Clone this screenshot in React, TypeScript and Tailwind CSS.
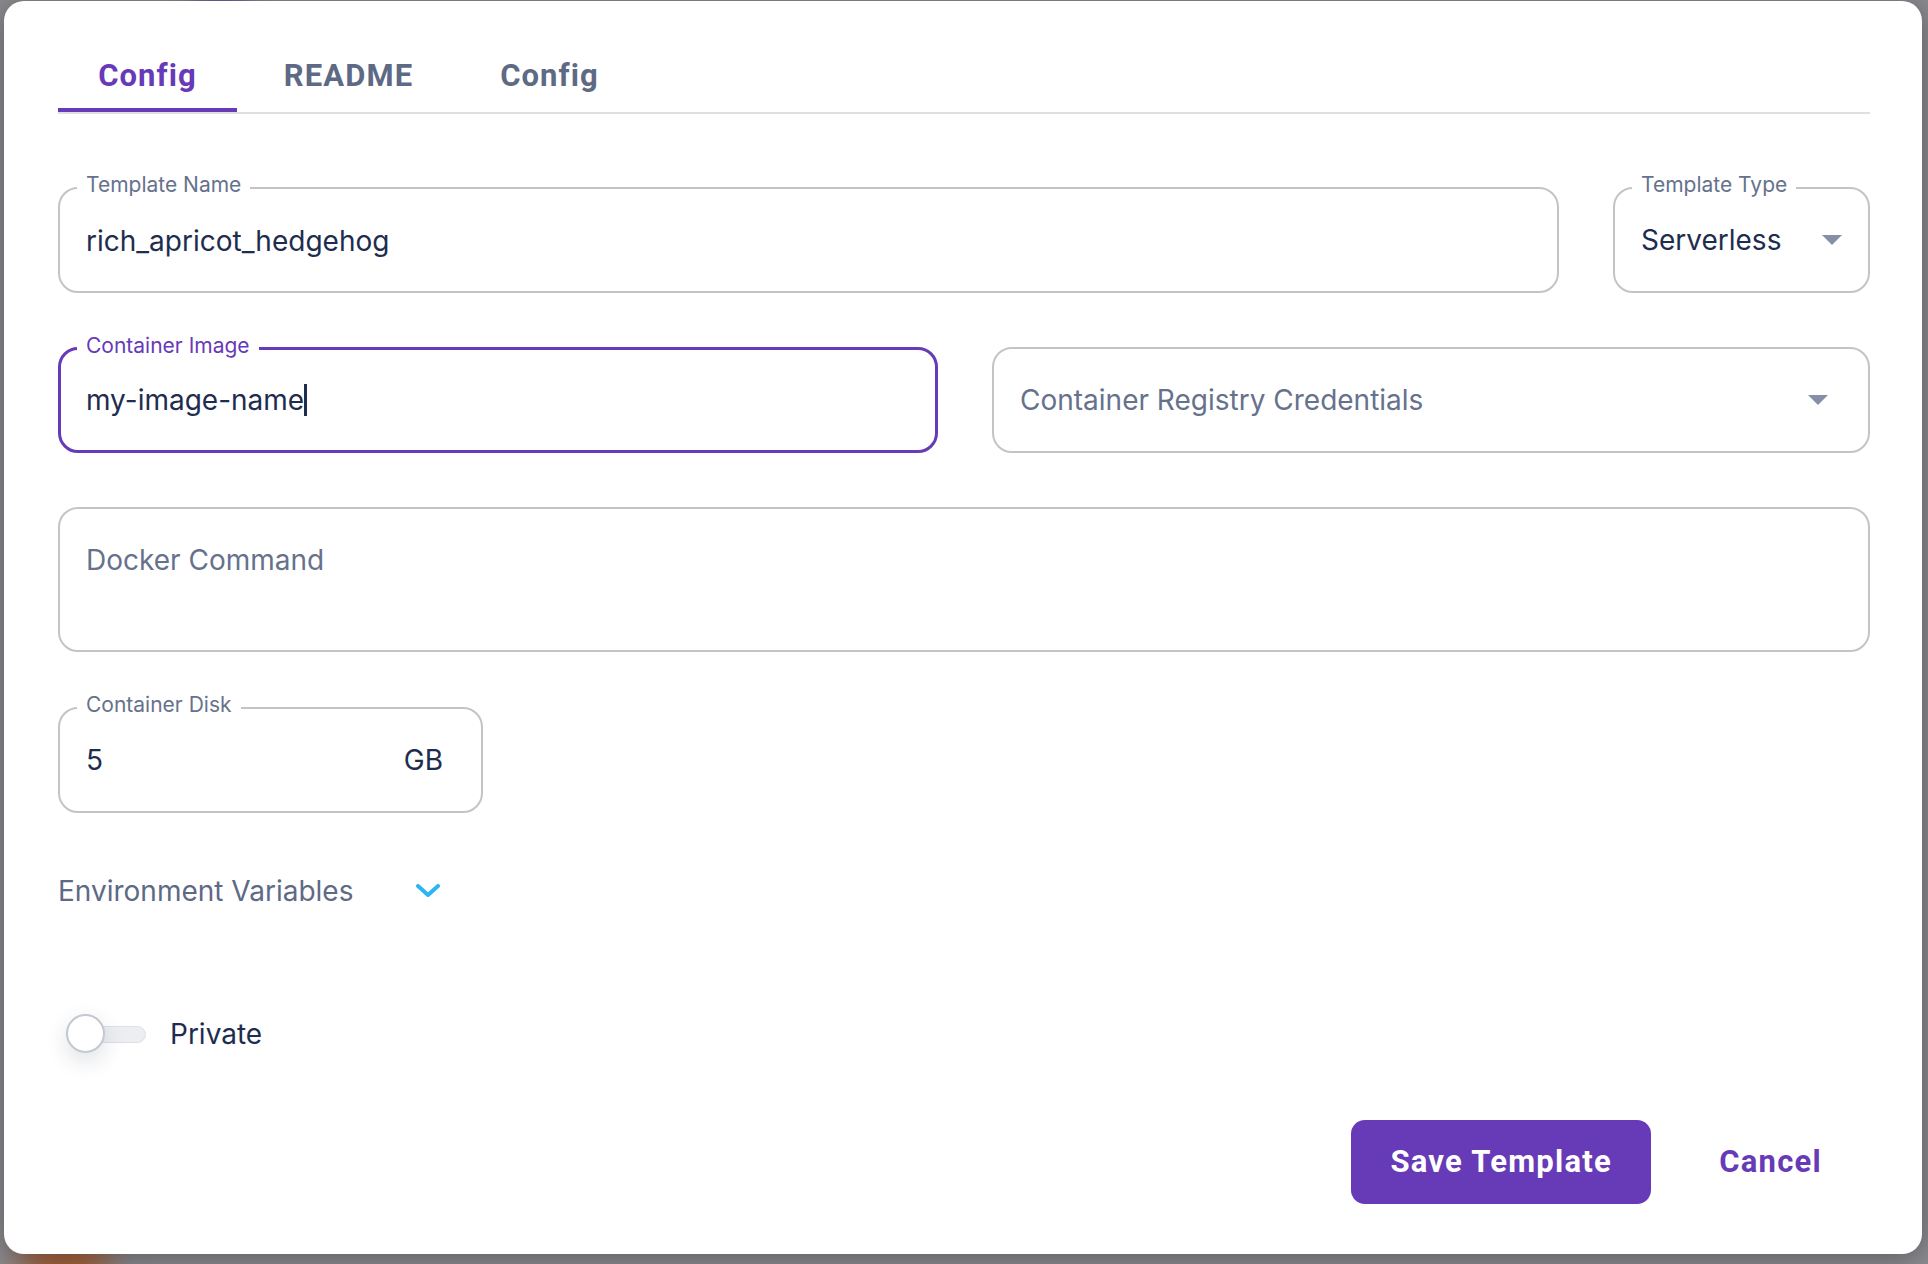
import { ReactNode } from "react";

interface FieldProps {
  label?: string;
  focused?: boolean;
  className?: string;
  children: ReactNode;
}

function Field({ label, focused, className, children }: FieldProps) {
  return (
    <div
      className={
        "relative rounded-[20px] bg-white " +
        (focused ? "border-[3px] border-[#673ab7] " : "border-2 border-[#c4c4c4] ") +
        (className ?? "")
      }
    >
      {label && (
        <span
          className={
            "absolute -top-[17px] bg-white px-[9px] text-[21px] leading-[26px] " +
            (focused ? "left-[16px] text-[#673ab7]" : "left-[17px] text-[#66728c]")
          }
        >
          {label}
        </span>
      )}
      {children}
    </div>
  );
}

function Caret() {
  return (
    <svg width="20" height="10" viewBox="0 0 20 10" className="shrink-0">
      <polygon points="0,0 20,0 10,10" fill="#8590a6" />
    </svg>
  );
}

const tabs = [
  { name: "Config", width: "w-[179px]", active: true },
  { name: "README", width: "w-[223px]", active: false },
  { name: "Config", width: "w-[179px]", active: false },
];

export default function App() {
  return (
    <div className="relative h-[1264px] w-[1928px] overflow-hidden bg-[#8b8b90] pl-[4px] pt-[1px] font-['Inter','Noto_Sans',sans-serif]">
      {/* blurred backdrop behind the dialog */}
      <div className="absolute -bottom-[30px] left-[20px] h-[60px] w-[90px] rounded-full bg-[#a4603a] blur-[16px]" />
      <div className="absolute -top-[20px] left-[190px] h-[30px] w-[60px] rounded-full bg-[#6e5a9a] blur-[10px]" />

      <div className="relative flex h-[1253px] w-[1918px] flex-col rounded-[20px] bg-white pl-[54px] pr-[52px] pt-[40px] shadow-[0_4px_30px_rgba(0,0,0,0.35)]">
        {/* tabs */}
        <div className="flex border-b-2 border-[#e0e0e0]">
          {tabs.map((tab, i) => (
            <div
              key={i}
              className={
                "relative flex h-[71px] items-center justify-center font-['Roboto',sans-serif] text-[31px] font-bold tracking-[0.035em] " +
                tab.width +
                (tab.active ? " text-[#673ab7]" : " text-[#5e6a85]")
              }
            >
              {tab.name}
              {tab.active && <span className="absolute bottom-0 left-0 h-[4px] w-full bg-[#673ab7]" />}
            </div>
          ))}
        </div>

        {/* template name + type */}
        <div className="mt-[73px] flex gap-[54px]">
          <Field label="Template Name" className="h-[106px] flex-1">
            <div className="flex h-full items-center px-[26px] pt-[1px] text-[28px] text-[#1e2d4f]">rich_apricot_hedgehog</div>
          </Field>
          <Field label="Template Type" className="h-[106px] w-[257px]">
            <div className="flex h-full items-center justify-between pl-[26px] pr-[26px] text-[28px] text-[#1e2d4f]">
              <span>Serverless</span>
              <Caret />
            </div>
          </Field>
        </div>

        {/* image + registry */}
        <div className="mt-[54px] flex gap-[54px]">
          <Field label="Container Image" focused className="h-[106px] flex-1">
            <div className="flex h-full items-center px-[25px] text-[28px] text-[#1e2d4f]">
              <span>my-image-name</span>
              <span className="h-[32px] w-[3px] bg-[#1e2d4f]" />
            </div>
          </Field>
          <Field className="h-[106px] flex-1">
            <div className="flex h-full items-center justify-between pl-[26px] pr-[40px] text-[28px] text-[#66728c]">
              <span>Container Registry Credentials</span>
              <Caret />
            </div>
          </Field>
        </div>

        {/* docker command */}
        <Field className="mt-[54px] h-[145px]">
          <div className="px-[26px] pt-[32px] text-[28px] leading-[38px] text-[#66728c]">Docker Command</div>
        </Field>

        {/* disk */}
        <Field label="Container Disk" className="mt-[55px] h-[106px] w-[425px]">
          <div className="flex h-full items-center justify-between pl-[26px] pr-[38px] text-[28px] text-[#1e2d4f]">
            <span>5</span>
            <span>GB</span>
          </div>
        </Field>

        {/* env vars */}
        <div className="mt-[58px] flex h-[40px] items-center">
          <span className="w-[358px] text-[28px] text-[#5e6a85]">Environment Variables</span>
          <svg width="24" height="14" viewBox="0 0 24 14" fill="none">
            <path d="M2 2 L12 11 L22 2" stroke="#2bb5f5" strokeWidth="4" strokeLinecap="round" strokeLinejoin="round" />
          </svg>
        </div>

        {/* private */}
        <div className="ml-[8px] mt-[103px] flex h-[40px] items-center">
          <div className="relative h-[40px] w-[80px]">
            <div className="absolute left-0 top-[12px] h-[17px] w-[80px] rounded-full border border-[#dde0e6] bg-[#eceef2]" />
            <div className="absolute left-0 top-0 h-[39px] w-[39px] rounded-full border-2 border-[#c3c8d1] bg-white shadow-[0_8px_22px_rgba(30,40,70,0.14)]" />
          </div>
          <span className="ml-[24px] text-[28px] text-[#1e2d4f]">Private</span>
        </div>

        {/* actions */}
        <div className="mt-[66px] flex justify-end gap-[20px] font-['Roboto',sans-serif] text-[31px] font-bold tracking-[0.04em]">
          <button className="h-[84px] w-[300px] rounded-[14px] bg-[#673ab7] text-white">Save Template</button>
          <button className="h-[84px] px-[48px] text-[#673ab7]">Cancel</button>
        </div>
      </div>
    </div>
  );
}
